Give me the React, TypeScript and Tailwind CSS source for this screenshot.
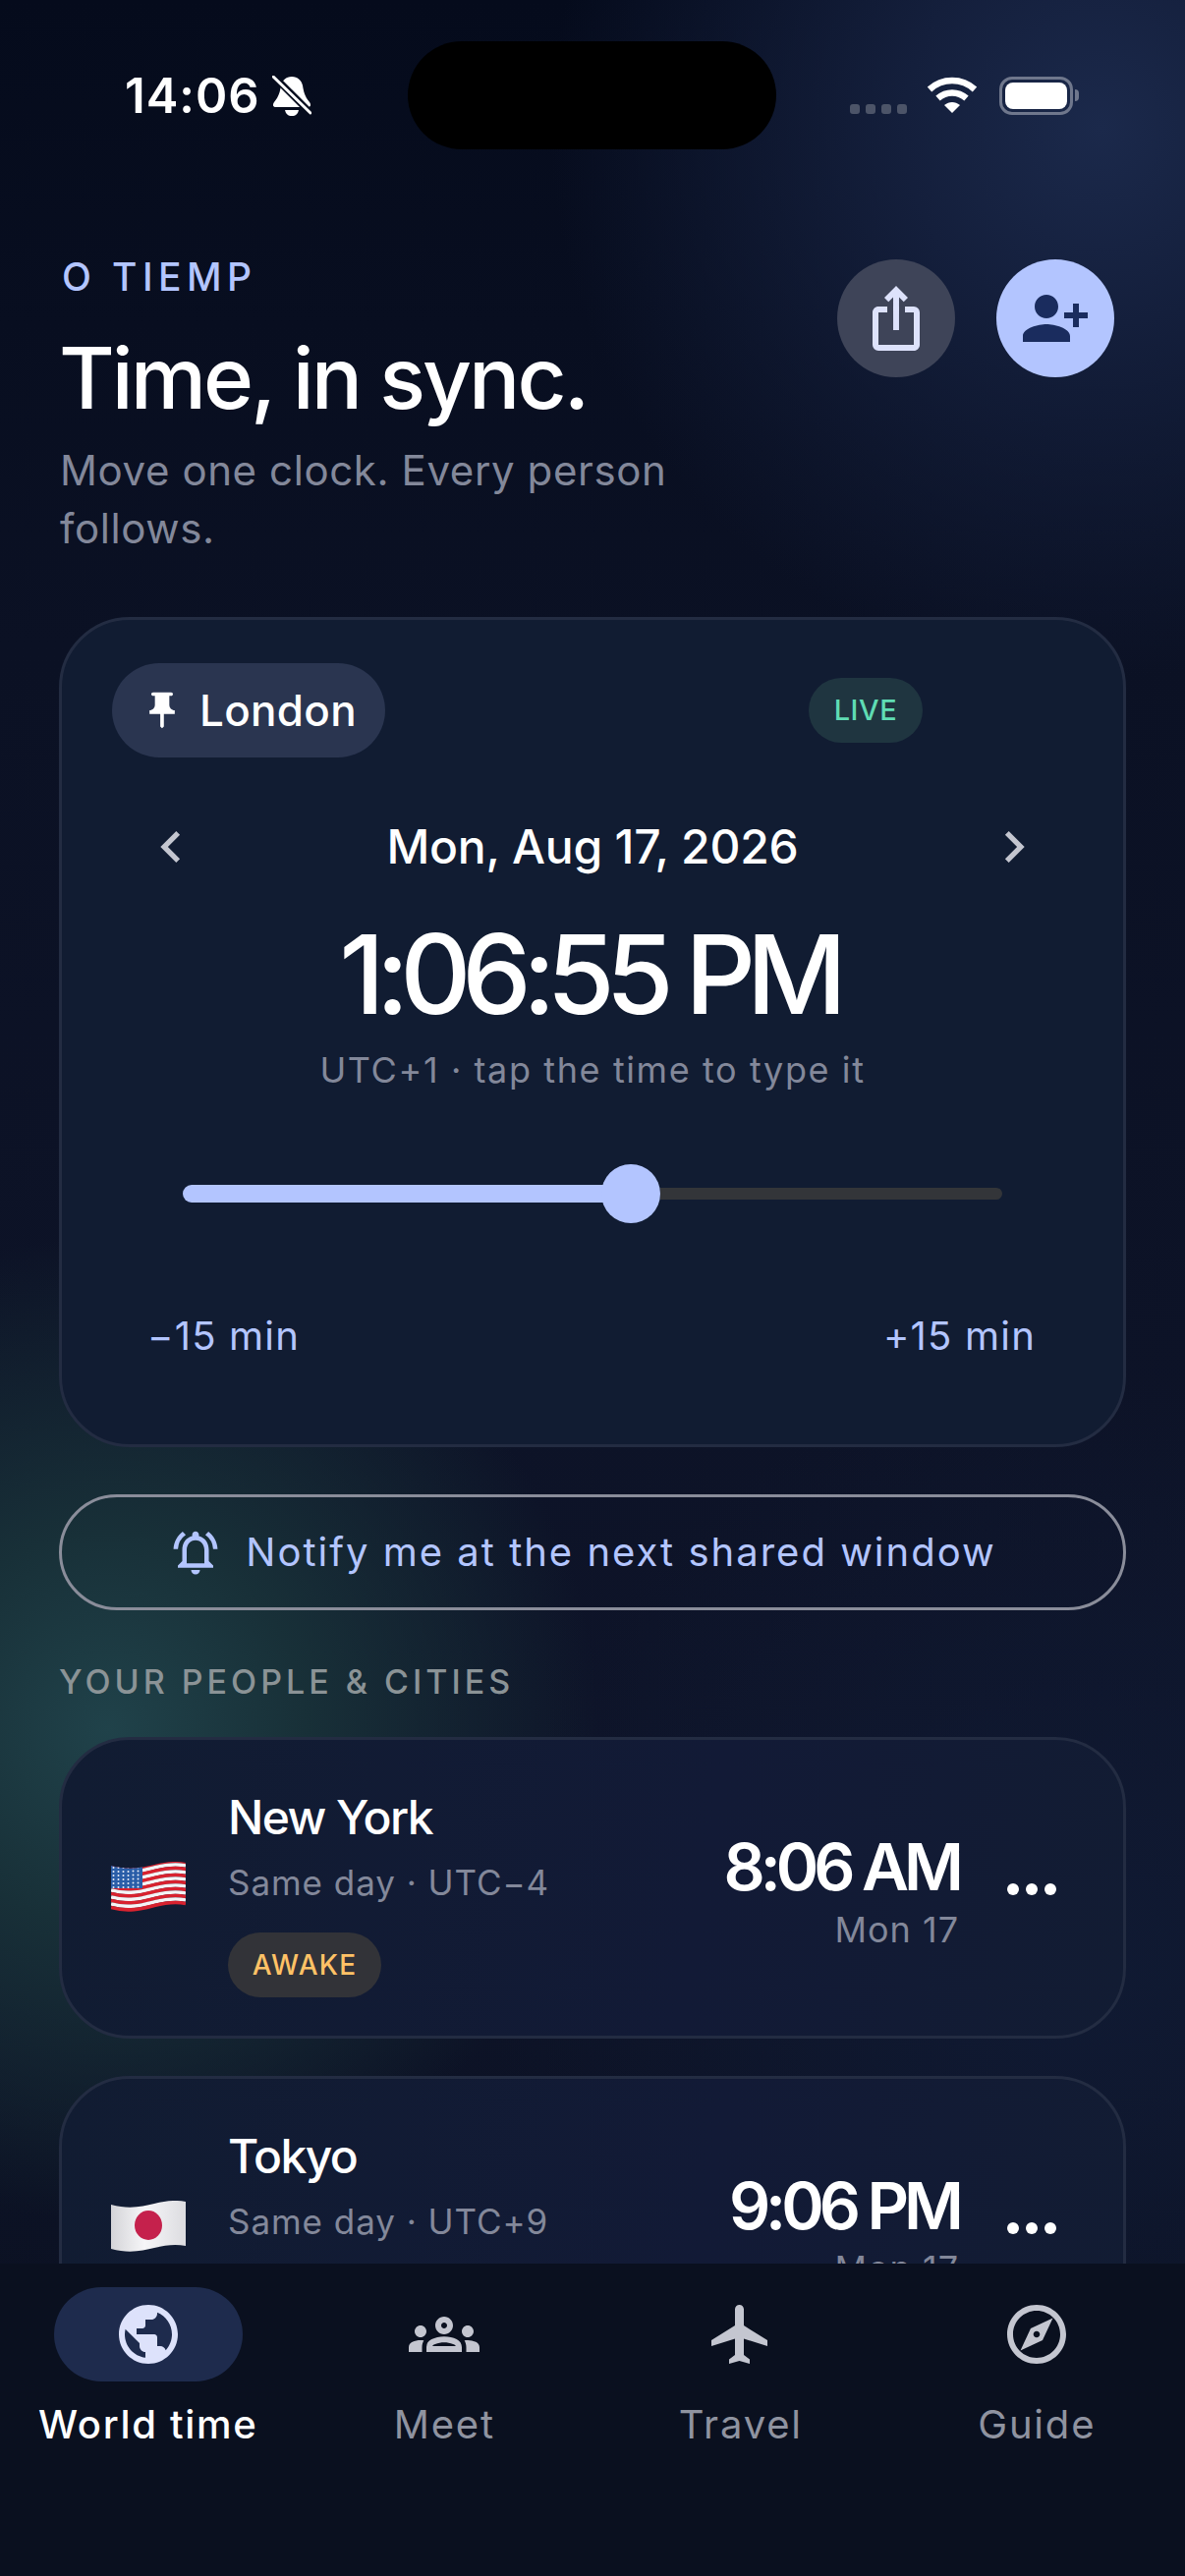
import React from "react";
import {
  MdChevronLeft,
  MdChevronRight,
  MdFlight,
  MdIosShare,
  MdOutlineExplore,
  MdOutlineGroups,
  MdOutlineNotificationsActive,
  MdPersonAddAlt1,
  MdPublic,
  MdPushPin,
} from "react-icons/md";

const wave = (y: number) => `M0 ${y + 5} C 18 ${y + 10}, 32 ${y + 6}, 44 ${y + 3} C 56 ${y}, 66 ${y - 1}, 76 ${y + 1}`;

function UsFlag() {
  const stripes = Array.from({ length: 13 }, (_, i) => i);
  const stars: [number, number][] = [];
  for (let r = 0; r < 6; r++) for (let c = 0; c < 6; c++) stars.push([2.5 + c * 5, 6 + r * 4 + (c > 3 ? -0.5 : 0)]);
  return (
    <svg width="76" height="54" viewBox="0 0 76 54" className="shrink-0">
      <defs>
        <clipPath id="us">
          <path d="M0 4 C 18 9, 32 6, 44 3 C 56 0, 66 -1, 76 1 L76 46 C 66 44, 56 45, 44 48 C 32 51, 18 54, 0 49 Z" />
        </clipPath>
      </defs>
      <g clipPath="url(#us)">
        {stripes.map((i) => (
          <path key={i} d={wave(i * 3.5 - 0.5)} fill="none" strokeWidth="3.6" stroke={i % 2 === 0 ? "#d8222f" : "#f4f4f6"} />
        ))}
        <rect x="0" y="0" width="32" height="27" fill="#2a5ea8" />
        {stars.map(([x, y], i) => (
          <circle key={i} cx={x} cy={y} r="1" fill="#e8eef8" />
        ))}
      </g>
    </svg>
  );
}

function JpFlag() {
  return (
    <svg width="76" height="54" viewBox="0 0 76 54" className="shrink-0">
      <defs>
        <linearGradient id="jp" x1="0" x2="1" y1="0" y2="0">
          <stop offset="0" stopColor="#d4d4d8" />
          <stop offset="0.45" stopColor="#f6f6f8" />
          <stop offset="1" stopColor="#dcdce0" />
        </linearGradient>
      </defs>
      <path d="M0 4 C 18 9, 32 6, 44 3 C 56 0, 66 -1, 76 1 L76 46 C 66 44, 56 45, 44 48 C 32 51, 18 54, 0 49 Z" fill="url(#jp)" />
      <ellipse cx="38" cy="25" rx="14" ry="15" fill="#c5214c" />
    </svg>
  );
}

function Wifi() {
  return (
    <svg width="52" height="38" viewBox="0 0 52 38" fill="none" stroke="white" strokeWidth="6.5">
      <path d="M3 13 C 16 1, 36 1, 49 13" />
      <path d="M11.5 22 C 20 14.5, 32 14.5, 40.5 22" />
      <path d="M18 29 L26 37 L34 29 C 29 25, 23 25, 18 29 Z" fill="white" stroke="none" />
    </svg>
  );
}

function BellOff() {
  return (
    <svg width="40" height="42" viewBox="0 0 40 42">
      <path d="M20 1 C 26 1, 30 5, 31 10 C 32 16, 33 21, 38 27 C 40 30, 39 32, 36 32 L4 32 C 1 32, 0 30, 2 27 C 7 21, 8 16, 9 10 C 10 5, 14 1, 20 1 Z" fill="white" />
      <path d="M13 35 H27 C 26 39, 24 41, 20 41 C 16 41, 14 39, 13 35 Z" fill="white" />
      <path d="M3 2 L39 38" stroke="#060c1d" strokeWidth="7" />
      <path d="M1 1 L39 38" stroke="white" strokeWidth="3" strokeLinecap="round" />
    </svg>
  );
}

function Battery() {
  return (
    <div className="flex items-center gap-[2px]">
      <div className="w-[75px] h-[39px] rounded-[13px] border-[3px] border-[#6f778c] p-[3px]">
        <div className="w-full h-full rounded-[8px] bg-white" />
      </div>
      <div className="w-[4px] h-[12px] rounded-r-[4px] bg-[#6f778c]" />
    </div>
  );
}

function CityCard({
  flag,
  name,
  sub,
  time,
  day,
  badge,
}: {
  flag: React.ReactNode;
  name: string;
  sub: string;
  time: string;
  day: string;
  badge?: boolean;
}) {
  return (
    <div className="shrink-0 h-[307px] rounded-[72px] border-[3px] border-[#232c42] bg-[linear-gradient(100deg,#111c32,#121a36_60%,#121c33)] pl-[50px] pr-[68px] flex items-center">
      {flag}
      <div className="ml-[43px] flex-1 flex flex-col mt-[11px]">
        <div className="text-[48px] leading-[58px] font-medium text-white tracking-[-1.6px]">{name}</div>
        <div className="text-[35px] leading-[44px] mt-[15px] text-[#83889a] tracking-[0.95px]">{sub}</div>
        <div className="h-[66px] mt-[29px]">
          {badge && (
            <div className="inline-flex items-center h-[66px] w-[156px] justify-center rounded-full bg-[#323338] text-[#ffc266] text-[28px] font-medium tracking-[1.2px]">
              AWAKE
            </div>
          )}
        </div>
      </div>
      <div className="flex flex-col items-end mt-[2px]">
        <div className="text-[66px] leading-[80px] font-semibold text-white tracking-[-5px]">{time}</div>
        <div className="text-[36px] leading-[44px] mt-[2px] text-[#83889a] tracking-[1px]">{day}</div>
      </div>
      <div className="ml-[49px] w-[50px] flex justify-between mt-[2px]">
        <span className="w-[12px] h-[12px] rounded-full bg-white" />
        <span className="w-[12px] h-[12px] rounded-full bg-white" />
        <span className="w-[12px] h-[12px] rounded-full bg-white" />
      </div>
    </div>
  );
}

function Tab({ icon, label, active }: { icon: React.ReactNode; label: string; active?: boolean }) {
  return (
    <div className="flex flex-col items-center">
      <div className={`w-[192px] h-[96px] rounded-full flex items-center justify-center ${active ? "bg-[#1e2b4d] text-[#dde2fb]" : "text-[#c4c6d0]"}`}>
        {icon}
      </div>
      <div className={`mt-[20px] text-[40px] leading-[48px] ${active ? "text-white font-medium tracking-[1.7px]" : "text-[#8f93a0] tracking-[1.8px]"}`}>
        {label}
      </div>
    </div>
  );
}

export default function App() {
  return (
    <div
      className="w-[1206px] h-[2622px] overflow-hidden flex flex-col text-white bg-[radial-gradient(circle_at_1120px_130px,#1b294b_0px,#141f3c_200px,rgba(10,16,32,0)_560px),radial-gradient(circle_at_110px_1760px,#20424a_0px,#183038_200px,rgba(10,16,32,0)_500px),radial-gradient(circle_at_1100px_2000px,#101a33_0px,rgba(10,16,32,0)_600px),linear-gradient(#050b1c,#0b1124_25%,#0e1429_70%,#0a1020)]"
      style={{ fontFamily: 'Inter, "Noto Sans", sans-serif' }}
    >
      <div className="shrink-0 h-[152px] pt-[42px] flex">
        <div className="w-[415px] h-[110px] pl-[127px] flex items-center gap-[12px] pt-[2px]">
          <span className="text-[49px] leading-[54px] font-semibold tracking-[1px]">14:06</span>
          <BellOff />
        </div>
        <div className="w-[375px] h-[110px] rounded-[55px] bg-black" />
        <div className="flex-1 h-[110px] pl-[75px] flex items-center">
          <div className="flex gap-[6px] self-end mb-[36px]">
            <span className="w-[10px] h-[10px] rounded-[3px] bg-[#4c5468]" />
            <span className="w-[10px] h-[10px] rounded-[3px] bg-[#4c5468]" />
            <span className="w-[10px] h-[10px] rounded-[3px] bg-[#4c5468]" />
            <span className="w-[10px] h-[10px] rounded-[3px] bg-[#4c5468]" />
          </div>
          <div className="ml-[20px]"><Wifi /></div>
          <div className="ml-[22px]"><Battery /></div>
        </div>
      </div>

      <div className="flex-1 min-h-0 overflow-hidden px-[60px] flex flex-col">
        <div className="shrink-0 h-[476px] flex justify-between pt-[112px]">
          <div className="w-[700px]">
            <div className="text-[39px] leading-[44px] pl-[3px] font-medium text-[#b3c5ff] tracking-[5.4px] mt-[-4px]">O TIEMP</div>
            <div className="text-[87px] leading-[100px] mt-[31px] font-medium text-white tracking-[-3px]">Time, in sync.</div>
            <div className="text-[42px] leading-[59px] mt-[14px] pl-[1px] text-[#83889a] tracking-[0.6px]">
              Move one clock. Every person
              <br />
              follows.
            </div>
          </div>
          <div className="flex gap-[42px] pr-[12px] h-[120px]">
            <div className="w-[120px] h-[120px] rounded-full bg-[#3e4458] flex items-center justify-center text-[#dde2fb]">
              <MdIosShare size={72} />
            </div>
            <div className="w-[120px] h-[120px] rounded-full bg-[#b3c5ff] flex items-center justify-center text-[#1a2c5e]">
              <MdPersonAddAlt1 size={72} />
            </div>
          </div>
        </div>

        <div className="shrink-0 h-[845px] rounded-[72px] border-[3px] border-[#232c42] bg-[#111c32] px-[51px] pt-[44px] flex flex-col">
          <div className="flex items-center h-[96px]">
            <div className="w-[278px] h-[96px] rounded-full bg-[#2a3550] flex items-center pl-[29px] gap-[16px]">
              <MdPushPin size={44} className="text-white" />
              <span className="text-[44px] font-medium text-white tracking-[0.3px]">London</span>
            </div>
            <div className="ml-[431px] w-[116px] h-[66px] rounded-full bg-[#1f3540] flex items-center justify-center text-[29px] font-medium text-[#5fdcb4] tracking-[0.6px]">
              LIVE
            </div>
          </div>

          <div className="mt-[49px] flex items-center justify-between h-[84px] px-[28px] text-[#c4c6d0]">
            <MdChevronLeft size={64} />
            <span className="text-[48px] font-medium text-white tracking-[-0.2px]">Mon, Aug 17, 2026</span>
            <MdChevronRight size={64} />
          </div>

          <div className="mt-[22px] pr-[8px] text-center text-[112px] leading-[130px] font-medium text-white tracking-[-9.2px]">1:06:55 PM</div>
          <div className="mt-[10px] text-center text-[36px] leading-[46px] text-[#83889a] tracking-[1.6px]">UTC+1 · tap the time to type it</div>

          <div className="mt-[73px] ml-[72px] w-[834px] h-[60px] flex items-center">
            <div className="w-[432px] h-[18px] rounded-l-full bg-[#b3c5ff]" />
            <div className="w-[60px] h-[60px] rounded-full bg-[#b3c5ff] ml-[-6px] shrink-0" />
            <div className="flex-1 h-[12px] rounded-r-full bg-[#333539]" />
          </div>

          <div className="mt-[90px] flex justify-between pl-[36px] pr-[38px] text-[40px] leading-[50px] text-[#b3c5ff] tracking-[1.2px]">
            <span>−15 min</span>
            <span>+15 min</span>
          </div>
        </div>

        <div className="shrink-0 mt-[48px] h-[118px] rounded-full border-[3px] border-[#8a8d9a] pr-[20px] flex items-center justify-center gap-[24px] text-[#b3c5ff]">
          <MdOutlineNotificationsActive size={54} />
          <span className="text-[40px] tracking-[2px]">Notify me at the next shared window</span>
        </div>

        <div className="shrink-0 mt-[51px] text-[34px] leading-[44px] font-medium text-[#8b9396] tracking-[4px]">YOUR PEOPLE &amp; CITIES</div>

        <div className="shrink-0 mt-[34px] flex flex-col gap-[38px]">
          <CityCard flag={<UsFlag />} name="New York" sub="Same day · UTC−4" time="8:06 AM" day="Mon 17" badge />
          <CityCard flag={<JpFlag />} name="Tokyo" sub="Same day · UTC+9" time="9:06 PM" day="Mon 17" />
        </div>
      </div>

      <div className="shrink-0 h-[318px] bg-[#0a101f] pt-[24px] grid grid-cols-4">
        <Tab icon={<MdPublic size={72} />} label="World time" active />
        <Tab icon={<MdOutlineGroups size={72} />} label="Meet" />
        <Tab icon={<MdFlight size={72} />} label="Travel" />
        <Tab icon={<MdOutlineExplore size={72} />} label="Guide" />
      </div>
    </div>
  );
}
